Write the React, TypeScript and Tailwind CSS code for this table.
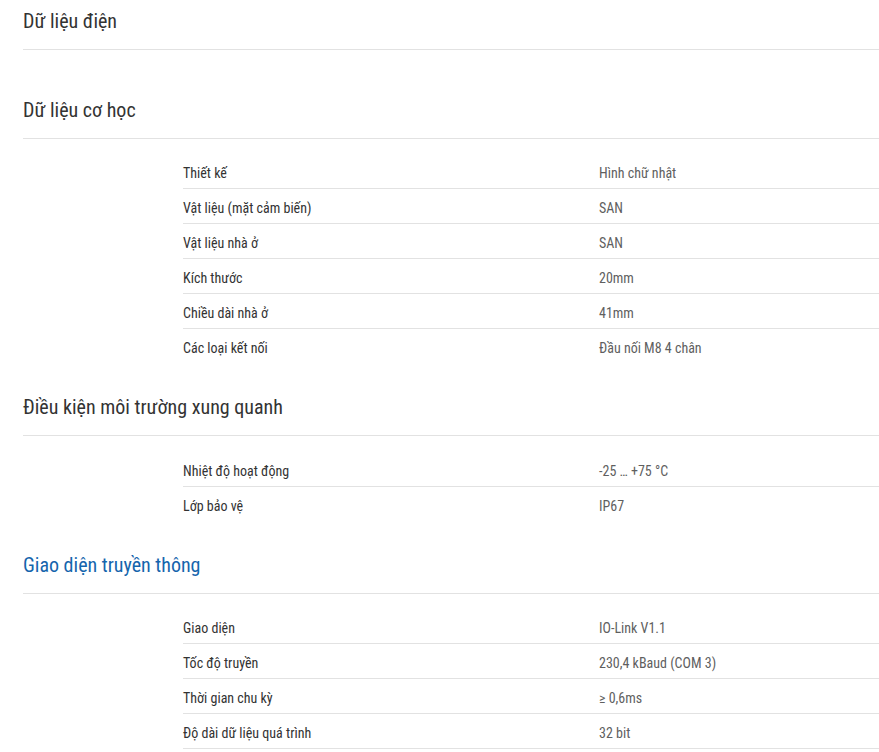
import React from 'react';

type Row = [string, string];

interface Section {
  title: string;
  rows: Row[];
  accent?: boolean;
  more?: boolean; // table continues below the fold, last row keeps its border
  nudge?: boolean; // the live page lands this table 1px lower
}

const sections: Section[] = [
  { title: 'Dữ liệu điện', rows: [] },
  {
    title: 'Dữ liệu cơ học',
    rows: [
      ['Thiết kế', 'Hình chữ nhật'],
      ['Vật liệu (mặt cảm biến)', 'SAN'],
      ['Vật liệu nhà ở', 'SAN'],
      ['Kích thước', '20mm'],
      ['Chiều dài nhà ở', '41mm'],
      ['Các loại kết nối', 'Đầu nối M8 4 chân'],
    ],
  },
  {
    title: 'Điều kiện môi trường xung quanh',
    nudge: true,
    rows: [
      ['Nhiệt độ hoạt động', '-25 … +75 °C'],
      ['Lớp bảo vệ', 'IP67'],
    ],
  },
  {
    title: 'Giao diện truyền thông',
    accent: true,
    more: true,
    rows: [
      ['Giao diện', 'IO-Link V1.1'],
      ['Tốc độ truyền', '230,4 kBaud (COM 3)'],
      ['Thời gian chu kỳ', '≥ 0,6ms'],
      ['Độ dài dữ liệu quá trình', '32 bit'],
    ],
  },
];

function SpecSection({ title, rows, accent, more, nudge }: Section): JSX.Element {
  return (
    <section className="pb-[22px]">
      <h2
        className={`pt-[7px] pb-[14px] border-b border-[#e2e2e2] text-[20px] leading-[28px] font-normal ${
          accent ? 'text-[#1565ad]' : 'text-[#333333]'
        }`}
      >
        {title}
      </h2>
      {rows.length === 0 ? (
        <div className="h-[17px]" />
      ) : (
        <div className={`${nudge ? 'mt-[16px]' : 'mt-[15px]'} ml-[160px]`}>
          {rows.map(([label, value], i) => {
            const last = i === rows.length - 1 && !more;
            return (
              <div
                key={label}
                className={`flex h-[35px] pt-[9px] border-b text-[14px] leading-[20px] ${
                  last ? 'border-transparent' : 'border-[#e2e2e2]'
                }`}
              >
                <div className="w-[416px] shrink-0 text-[#333333]">{label}</div>
                <div className="text-[#5f5f5f]">{value}</div>
              </div>
            );
          })}
        </div>
      )}
    </section>
  );
}

export default function App(): JSX.Element {
  return (
    <div
      className="min-h-screen bg-white pl-[23px]"
      style={{ fontFamily: '"Roboto Condensed", "Liberation Sans Narrow", Roboto, sans-serif' }}
    >
      {sections.map((s) => (
        <SpecSection key={s.title} {...s} />
      ))}
    </div>
  );
}
